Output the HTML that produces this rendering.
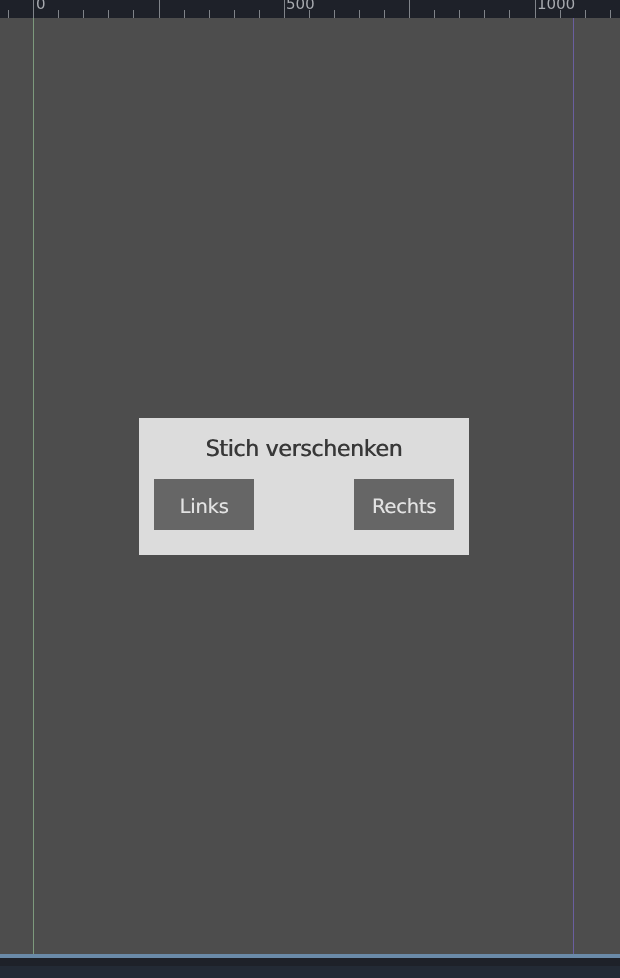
<!DOCTYPE html>
<html><head><meta charset="utf-8"><style>
html,body{margin:0;padding:0;width:620px;height:978px;overflow:hidden;background:#4d4d4d;font-family:"Liberation Sans","DejaVu Sans",sans-serif;position:relative}
.r{position:absolute;top:0;left:0;width:620px;height:18px;background:#1e2129}
.t{position:absolute;width:1px;background:#80848a}
.lbl{position:absolute;top:-5px;font-size:15px;color:#a8abb0;font-family:"DejaVu Sans",sans-serif}
.dlg{position:absolute;left:139px;top:418px;width:330px;height:137px;background:#dcdcdc}
.title{position:absolute;left:0;width:330px;top:19px;text-align:center;font-size:22px;color:#383838;font-family:"DejaVu Sans",sans-serif;letter-spacing:-0.3px;text-shadow:0.4px 0 0 #383838,-0.2px 0 0 #383838}
.b{position:absolute;top:61px;width:100px;height:51px;background:#666;color:#e2e2e2;font-size:19.5px;font-family:"DejaVu Sans",sans-serif;text-align:center;line-height:55px;letter-spacing:-0.2px;text-shadow:0.3px 0 0 #e2e2e2}
</style></head><body>
<div class="r">
<div class="t" style="left:8px;top:10px;height:8px"></div>
<div class="t" style="left:33px;top:0;height:18px"></div>
<div class="t" style="left:58px;top:10px;height:8px"></div>
<div class="t" style="left:83px;top:10px;height:8px"></div>
<div class="t" style="left:108px;top:10px;height:8px"></div>
<div class="t" style="left:133px;top:10px;height:8px"></div>
<div class="t" style="left:159px;top:0;height:18px"></div>
<div class="t" style="left:184px;top:10px;height:8px"></div>
<div class="t" style="left:209px;top:10px;height:8px"></div>
<div class="t" style="left:234px;top:10px;height:8px"></div>
<div class="t" style="left:259px;top:10px;height:8px"></div>
<div class="t" style="left:284px;top:0;height:18px"></div>
<div class="t" style="left:309px;top:10px;height:8px"></div>
<div class="t" style="left:334px;top:10px;height:8px"></div>
<div class="t" style="left:359px;top:10px;height:8px"></div>
<div class="t" style="left:384px;top:10px;height:8px"></div>
<div class="t" style="left:409px;top:0;height:18px"></div>
<div class="t" style="left:434px;top:10px;height:8px"></div>
<div class="t" style="left:459px;top:10px;height:8px"></div>
<div class="t" style="left:484px;top:10px;height:8px"></div>
<div class="t" style="left:509px;top:10px;height:8px"></div>
<div class="t" style="left:535px;top:0;height:18px"></div>
<div class="t" style="left:560px;top:10px;height:8px"></div>
<div class="t" style="left:585px;top:10px;height:8px"></div>
<div class="t" style="left:610px;top:10px;height:8px"></div>
<div class="lbl" style="left:36px">0</div>
<div class="lbl" style="left:286px">500</div>
<div class="lbl" style="left:537px">1000</div>
</div>
<div style="position:absolute;left:33px;top:18px;width:1px;height:936px;background:#7d9a7d"></div>
<div style="position:absolute;left:573px;top:18px;width:1px;height:936px;background:#6a5fa0"></div>
<div style="position:absolute;left:0;top:954px;width:620px;height:4px;background:#6a8aa8"></div>
<div style="position:absolute;left:0;top:958px;width:620px;height:8px;background:#1e2129"></div>
<div style="position:absolute;left:0;top:966px;width:620px;height:12px;background:#232a35"></div>
<div class="dlg">
<div class="title">Stich verschenken</div>
<div class="b" style="left:15px">Links</div>
<div class="b" style="left:215px">Rechts</div>
</div>
</body></html>
